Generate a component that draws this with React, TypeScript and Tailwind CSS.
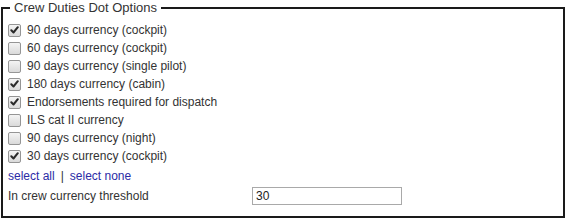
import React, { useState } from 'react';

// --- DATA ---
const OPTIONS: { label: string; checked: boolean }[] = [
  { label: '90 days currency (cockpit)', checked: true },
  { label: '60 days currency (cockpit)', checked: false },
  { label: '90 days currency (single pilot)', checked: false },
  { label: '180 days currency (cabin)', checked: true },
  { label: 'Endorsements required for dispatch', checked: true },
  { label: 'ILS cat II currency', checked: false },
  { label: '90 days currency (night)', checked: false },
  { label: '30 days currency (cockpit)', checked: true },
];

// --- COMPONENT: classic grey checkbox ---
const Box: React.FC<{ checked: boolean; onToggle: () => void }> = ({ checked, onToggle }) => (
  <span
    onClick={onToggle}
    className="relative flex h-[13px] w-[13px] shrink-0 items-center justify-center rounded-[2px] border border-[#959595] bg-gradient-to-b from-[#f4f4f4] to-[#dadada]"
  >
    {checked && (
      <svg width="9" height="8" viewBox="0 0 9 8" className="block">
        <path d="M1.3 4.2 L3.5 6.5 L7.8 1.2" fill="none" stroke="#2a2a2a" strokeWidth="2" strokeLinecap="round" strokeLinejoin="round" />
      </svg>
    )}
  </span>
);

const App: React.FC = () => {
  const [opts, setOpts] = useState(OPTIONS);
  const [threshold, setThreshold] = useState('30');

  const toggle = (i: number) =>
    setOpts(prev => prev.map((o, idx) => (idx === i ? { ...o, checked: !o.checked } : o)));
  const setAll = (v: boolean) => setOpts(prev => prev.map(o => ({ ...o, checked: v })));

  return (
    <div className="h-[220px] w-[566px] bg-white text-[12px] text-[#333] [font-family:'Liberation_Sans',Arial,sans-serif]">
      <fieldset className="ml-px h-[218px] w-[564px] border-2 border-[#1a1a1a] px-[5px] pb-0">
        <legend className="ml-[2px] px-[4px] text-[13px] leading-[16px] text-[#333]">Crew Duties Dot Options</legend>

        <div className="flex flex-col pt-[5px]">
          {opts.map((o, i) => (
            <label key={o.label} className="flex h-[18px] items-center gap-[6px]">
              <Box checked={o.checked} onToggle={() => toggle(i)} />
              <span className="leading-[18px]">{o.label}</span>
            </label>
          ))}

          <div className="mt-[1px] flex h-[20px] items-center text-[#2b2ba6]">
            <a onClick={() => setAll(true)} className="cursor-pointer">select all</a>
            <span className="px-[6px] text-[#333]">|</span>
            <a onClick={() => setAll(false)} className="cursor-pointer">select none</a>
          </div>

          <div className="mt-[1px] flex items-center">
            <span className="w-[244px]">In crew currency threshold</span>
            <input
              value={threshold}
              onChange={e => setThreshold(e.target.value)}
              className="h-[18px] w-[150px] border border-[#a9a9a9] px-[3px] text-[12px] text-[#222] outline-none"
            />
          </div>
        </div>
      </fieldset>
    </div>
  );
};

export default App;
